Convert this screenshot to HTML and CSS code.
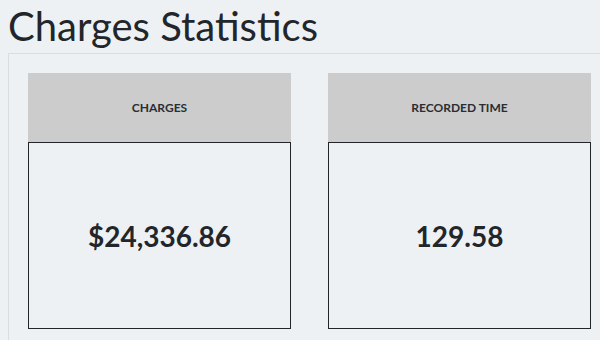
FILE: index.html
```html
<!DOCTYPE html>
<html>
<head>
<meta charset="utf-8">
<link rel="stylesheet" href="styles.css">
</head>
<body>
<h1 class="title">Charges Statistics</h1>
<div class="panel">
  <div class="card">
    <div class="card-head">CHARGES</div>
    <div class="card-body">$24,336.86</div>
  </div>
  <div class="card">
    <div class="card-head">RECORDED TIME</div>
    <div class="card-body">129.58</div>
  </div>
</div>
</body>
</html>
```
FILE: styles.css
```css
html, body {
  margin: 0;
  padding: 0;
  background: #edf1f4;
  font-family: Lato, "Liberation Sans", sans-serif;
  color: #22262a;
  overflow: hidden;
  height: 340px;
}
.title {
  margin: 0;
  padding: 0 0 0 8px;
  font-size: 40px;
  font-weight: 400;
  line-height: 52px;
  height: 53px;
}
.panel {
  margin-left: 8px;
  height: 287px;
  border-top: 1px solid #d8dde1;
  border-left: 1px solid #d8dde1;
  box-sizing: border-box;
  padding: 19px 0 0 19px;
  display: flex;
  gap: 37px;
}
.card {
  width: 263px;
  display: flex;
  flex-direction: column;
}
.card-head {
  height: 69px;
  background: #cccccc;
  display: flex;
  align-items: center;
  justify-content: center;
  font-size: 12px;
  font-weight: 700;
  color: #2a2e33;
}
.card-body {
  height: 187px;
  box-sizing: border-box;
  border: 1px solid #22262a;
  display: flex;
  align-items: center;
  justify-content: center;
  font-size: 28px;
  font-weight: 700;
}
```
